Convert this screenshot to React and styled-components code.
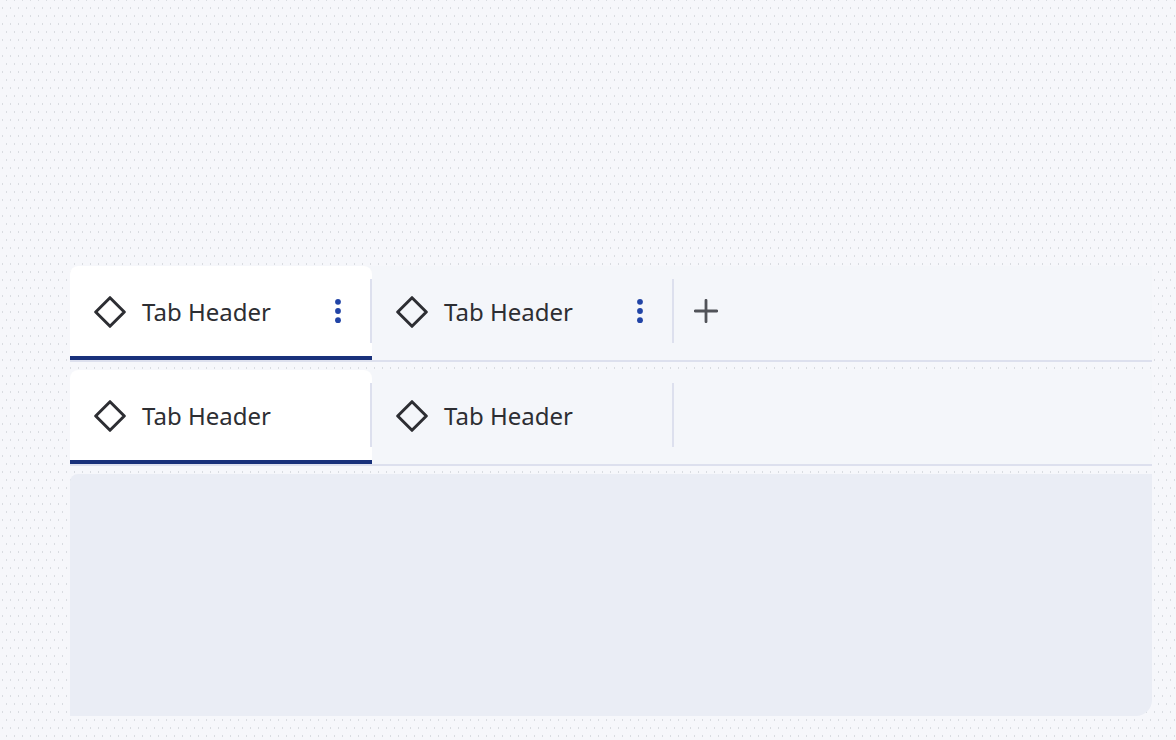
import React, { useState } from "react";
import styled, { createGlobalStyle, css } from "styled-components";

const dot = "transparent 180deg, #d9dce1 0 270deg, transparent 0";

const GlobalStyle = createGlobalStyle`
  *, *::before, *::after { box-sizing: border-box; }
  body {
    margin: 0;
    color: #2d2e33;
    font-family: "Noto Sans", sans-serif;
    background-color: #f6f7fb;
    background-image:
      conic-gradient(from 90deg at 1px 2px, ${dot}),
      conic-gradient(from 90deg at 1px 2px, ${dot});
    background-size: 8px 16px;
    background-position: 2px 7px, 6px 15px;
  }
`;

const Page = styled.main`
  display: flex;
  flex-direction: column;
  gap: 8px;
  min-height: 100vh;
  padding: 266px 24px 24px 70px;
`;

const TabBar = styled.div`
  display: flex;
  height: 96px;
  background: #f4f6fa;
  border-bottom: 2px solid #dde0ee;
  border-top-left-radius: 8px;
`;

const TabList = styled.div`
  display: flex;
`;

const Tab = styled.div`
  position: relative;
  display: flex;
  align-items: center;
  width: 302px;
  padding: 0 24px 4px 0;

  ${({ $active }) =>
    $active &&
    css`
      background: linear-gradient(#19317b, #19317b) bottom / 100% 4px no-repeat #ffffff;
      border-radius: 8px 8px 0 0;
    `}

  &::after {
    content: "";
    position: absolute;
    top: 13px;
    right: 0;
    width: 2px;
    height: 64px;
    background: #dde0ee;
  }
`;

const TabButton = styled.button`
  display: flex;
  flex: 1;
  align-items: center;
  gap: 16px;
  height: 100%;
  padding: 2px 0 0 24px;
  border: 0;
  background: none;
  color: inherit;
  font: 400 24px/32px "Noto Sans", sans-serif;
  text-align: left;
  cursor: pointer;
`;

const IconButton = styled.button`
  display: flex;
  align-items: center;
  justify-content: center;
  align-self: center;
  width: 20px;
  height: 32px;
  padding: 0;
  border: 0;
  background: none;
  color: #2144a6;
  cursor: pointer;
`;

const AddButton = styled(IconButton)`
  width: 64px;
  height: 90px;
  align-self: flex-start;
  color: #515359;
`;

const Panel = styled.section`
  flex: 1;
  background: #eaedf5;
  border-radius: 8px 0 16px 0;
`;

const DiamondIcon = () => (
  <svg width="32" height="32" viewBox="0 0 32 32" fill="none" aria-hidden="true">
    <path
      d="M16 1.7 30.3 16 16 30.3 1.7 16Z"
      stroke="currentColor"
      strokeWidth="3"
      strokeLinejoin="round"
    />
  </svg>
);

const MoreIcon = () => (
  <svg width="8" height="32" viewBox="0 0 8 32" fill="currentColor" aria-hidden="true">
    <circle cx="4" cy="6.8" r="2.9" />
    <circle cx="4" cy="16" r="2.9" />
    <circle cx="4" cy="25.2" r="2.9" />
  </svg>
);

const PlusIcon = () => (
  <svg width="24" height="24" viewBox="0 0 24 24" fill="none" aria-hidden="true">
    <path
      d="M12 1.3V22.7M1.3 12H22.7"
      stroke="currentColor"
      strokeWidth="2.8"
      strokeLinecap="round"
    />
  </svg>
);

const tabs = ["Tab Header", "Tab Header"];

function Tabs({ label, editable = false }) {
  const [active, setActive] = useState(0);
  return (
    <TabBar>
      <TabList role="tablist" aria-label={label}>
        {tabs.map((title, index) => (
          <Tab key={index} role="presentation" $active={index === active}>
            <TabButton
              type="button"
              role="tab"
              aria-selected={index === active}
              onClick={() => setActive(index)}
            >
              <DiamondIcon />
              {title}
            </TabButton>
            {editable && (
              <IconButton type="button" aria-label="Tab options">
                <MoreIcon />
              </IconButton>
            )}
          </Tab>
        ))}
      </TabList>
      {editable && (
        <AddButton type="button" aria-label="Add tab">
          <PlusIcon />
        </AddButton>
      )}
    </TabBar>
  );
}

export default function App() {
  return (
    <>
      <GlobalStyle />
      <Page>
        <Tabs label="Editable tabs" editable />
        <Tabs label="Tabs" />
        <Panel aria-label="Tab content" />
      </Page>
    </>
  );
}
